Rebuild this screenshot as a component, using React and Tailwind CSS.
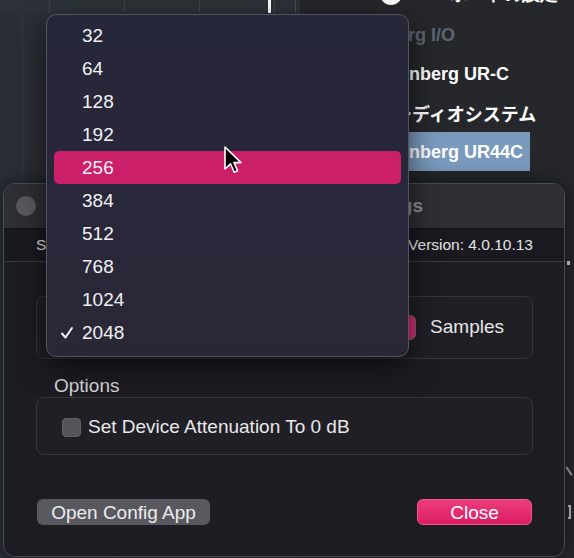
import React from "react";

const sizes = ["32", "64", "128", "192", "256", "384", "512", "768", "1024", "2048"];
const hovered = "256";
const current = "2048";

function Cursor() {
  return (
    <svg width="20" height="30" viewBox="0 0 20 30" className="absolute left-[223px] top-[145px]">
      <path
        d="M2 2 L2 24 L7.5 18.8 L11.2 27.2 L14.6 25.7 L11 17.6 L18 17.6 Z"
        fill="#000"
        stroke="#fff"
        strokeWidth="1.6"
        strokeLinejoin="round"
      />
    </svg>
  );
}

function Check() {
  return (
    <svg width="14" height="14" viewBox="0 0 14 14">
      <path d="M2 7.5 L5.5 11.5 L12 2" fill="none" stroke="#f2f2f4" strokeWidth="2" strokeLinecap="round" strokeLinejoin="round" />
    </svg>
  );
}

function SizeMenu() {
  return (
    <div className="absolute left-[46px] top-[14px] w-[363px] h-[343px] rounded-[10px] border border-[#55545e] bg-[linear-gradient(180deg,#262739,#29273a_60%,#2a2735)] pt-[4px] pb-[7px] shadow-[0_10px_30px_rgba(0,0,0,0.6)]">
      {sizes.map((s) => (
        <div key={s} className="h-[33px] px-[7px]">
          <div
            className={
              "h-full flex items-center rounded-[5px] " +
              (s === hovered ? "bg-[#cc1f69]" : "")
            }
          >
            <span className="w-[28px] flex justify-start pl-[6px]">
              {s === current && <Check />}
            </span>
            <span className="text-[19px] text-[#f1f1f3] leading-none">{s}</span>
          </div>
        </div>
      ))}
    </div>
  );
}

function DeviceMenu() {
  return (
    <div className="flex flex-col -mt-[26px] ml-[72px] w-[158px] font-bold text-[18px] leading-none">
      <div className="h-[39px] flex items-center pl-[8px] gap-[10px] text-white whitespace-nowrap">
        <span className="w-[22px] h-[22px] rounded-full bg-white shrink-0" />
        MIDIポートの設定
      </div>
      <div className="h-[39px] mt-[2px] flex items-center -ml-[29px] text-[#5c6570] whitespace-nowrap">
        Steinberg I/O
      </div>
      <div className="h-[39px] flex items-center pl-[4px] text-white whitespace-nowrap">
        Steinberg UR-C
      </div>
      <div className="h-[39px] flex items-center pl-[4px] text-white whitespace-nowrap font-['Noto_Sans_CJK_JP',sans-serif] font-bold text-[18px]">
        オーディオシステム
      </div>
      <div className="h-[39px] flex items-center pl-[4px] text-white whitespace-nowrap bg-[#7a9abd]">
        Steinberg UR44C
      </div>
    </div>
  );
}

function SettingsWindow() {
  return (
    <div className="absolute left-[3px] top-[183px] w-[562px] h-[374px] rounded-[12px] border border-[#4c4b52] bg-[#1d1c23] overflow-hidden shadow-[0_0_20px_rgba(0,0,0,0.5)] flex flex-col">
      <div className="h-[45px] shrink-0 bg-[#2f2e34] border-b border-[#121116] flex items-center pl-[12px] pr-[141px]">
        <span className="w-[20px] h-[20px] rounded-full bg-[#5a595f]" />
        <span className="ml-auto text-[19px] font-bold text-[#8d8c92] whitespace-nowrap">
          Steinberg UR44C Settings
        </span>
      </div>
      <div className="h-[33px] shrink-0 bg-[#1a1920] border-b border-[#3a393f] flex items-center justify-between pl-[32px] pr-[31px] text-[15.5px] text-[#e4e4e6]">
        <span>Steinberg UR44C</span>
        <span>Version: 4.0.10.13</span>
      </div>

      <div className="flex flex-col px-[32px]">
        <div className="h-[34px] flex items-end pb-[3px] pl-[18px] text-[19px] text-[#d6d6d9] leading-none">
          Buffer Size
        </div>
        <div className="h-[63px] w-[497px] rounded-[8px] border border-[#36353c] bg-[#201f26] flex items-center justify-end gap-[14px] pr-[28px]">
          <div className="w-[220px] h-[25px] rounded-[6px] bg-[#d92a6e] border border-[#6b6a70]" />
          <span className="text-[19px] text-[#e6e6e8]">Samples</span>
        </div>

        <div className="h-[38px] flex items-end pb-[2px] pl-[18px] text-[19px] text-[#d6d6d9] leading-none">
          Options
        </div>
        <div className="h-[58px] w-[497px] rounded-[8px] border border-[#36353c] bg-[#201f26] flex items-center pl-[25px] pt-[3px] gap-[7px]">
          <span className="w-[19px] h-[19px] rounded-[4px] bg-[#55545a] border border-[#606066]" />
          <span className="text-[19px] text-[#e8e8ea]">Set Device Attenuation To 0 dB</span>
        </div>

        <div className="mt-[44px] flex justify-between pl-[1px]">
          <button className="w-[173px] h-[26px] rounded-[6px] bg-[#59585f] text-[19px] text-[#ececee] leading-none">
            Open Config App
          </button>
          <button className="w-[115px] h-[26px] rounded-[6px] bg-[linear-gradient(180deg,#ec3c7d,#dc1d64)] border border-[#f0588e] text-[19px] text-white leading-none">
            Close
          </button>
        </div>
      </div>
    </div>
  );
}

export default function App() {
  return (
    <div className="relative w-[574px] h-[558px] overflow-hidden bg-[#25272b] font-['Liberation_Sans',Arial,sans-serif]">
      <div className="flex h-full">
        {/* track area behind the dialogs */}
        <div className="w-[300px] h-full bg-[#2a2e35] flex flex-col">
          <div className="h-[13px] bg-[#2d3239] bg-[repeating-linear-gradient(90deg,transparent_0_49px,#3d424a_49px_50px,transparent_50px_75px)] flex">
            <div className="ml-[268px] w-[3px] h-full bg-white" />
            <div className="ml-[24px] w-[1px] h-full bg-[#474c54]" />
          </div>
          <div className="flex-1 bg-[repeating-linear-gradient(90deg,transparent_0_22px,#343941_22px_23px,transparent_23px_46px)]" />
        </div>
        <div className="flex-1 h-full">
          <DeviceMenu />
        </div>
      </div>

      <div className="absolute left-[567px] top-[261px] w-[3px] h-[4px] bg-[#cfcfcf]" />
      <div className="absolute left-[568px] top-[466px] w-[2px] h-[10px] bg-[#9a9a9a] rotate-[-35deg]" />
      <div className="absolute left-[568px] top-[505px] w-[3px] h-[14px] border-r-2 border-y-2 border-[#bdbdbd]" />

      <SettingsWindow />
      <SizeMenu />
      <Cursor />
    </div>
  );
}
